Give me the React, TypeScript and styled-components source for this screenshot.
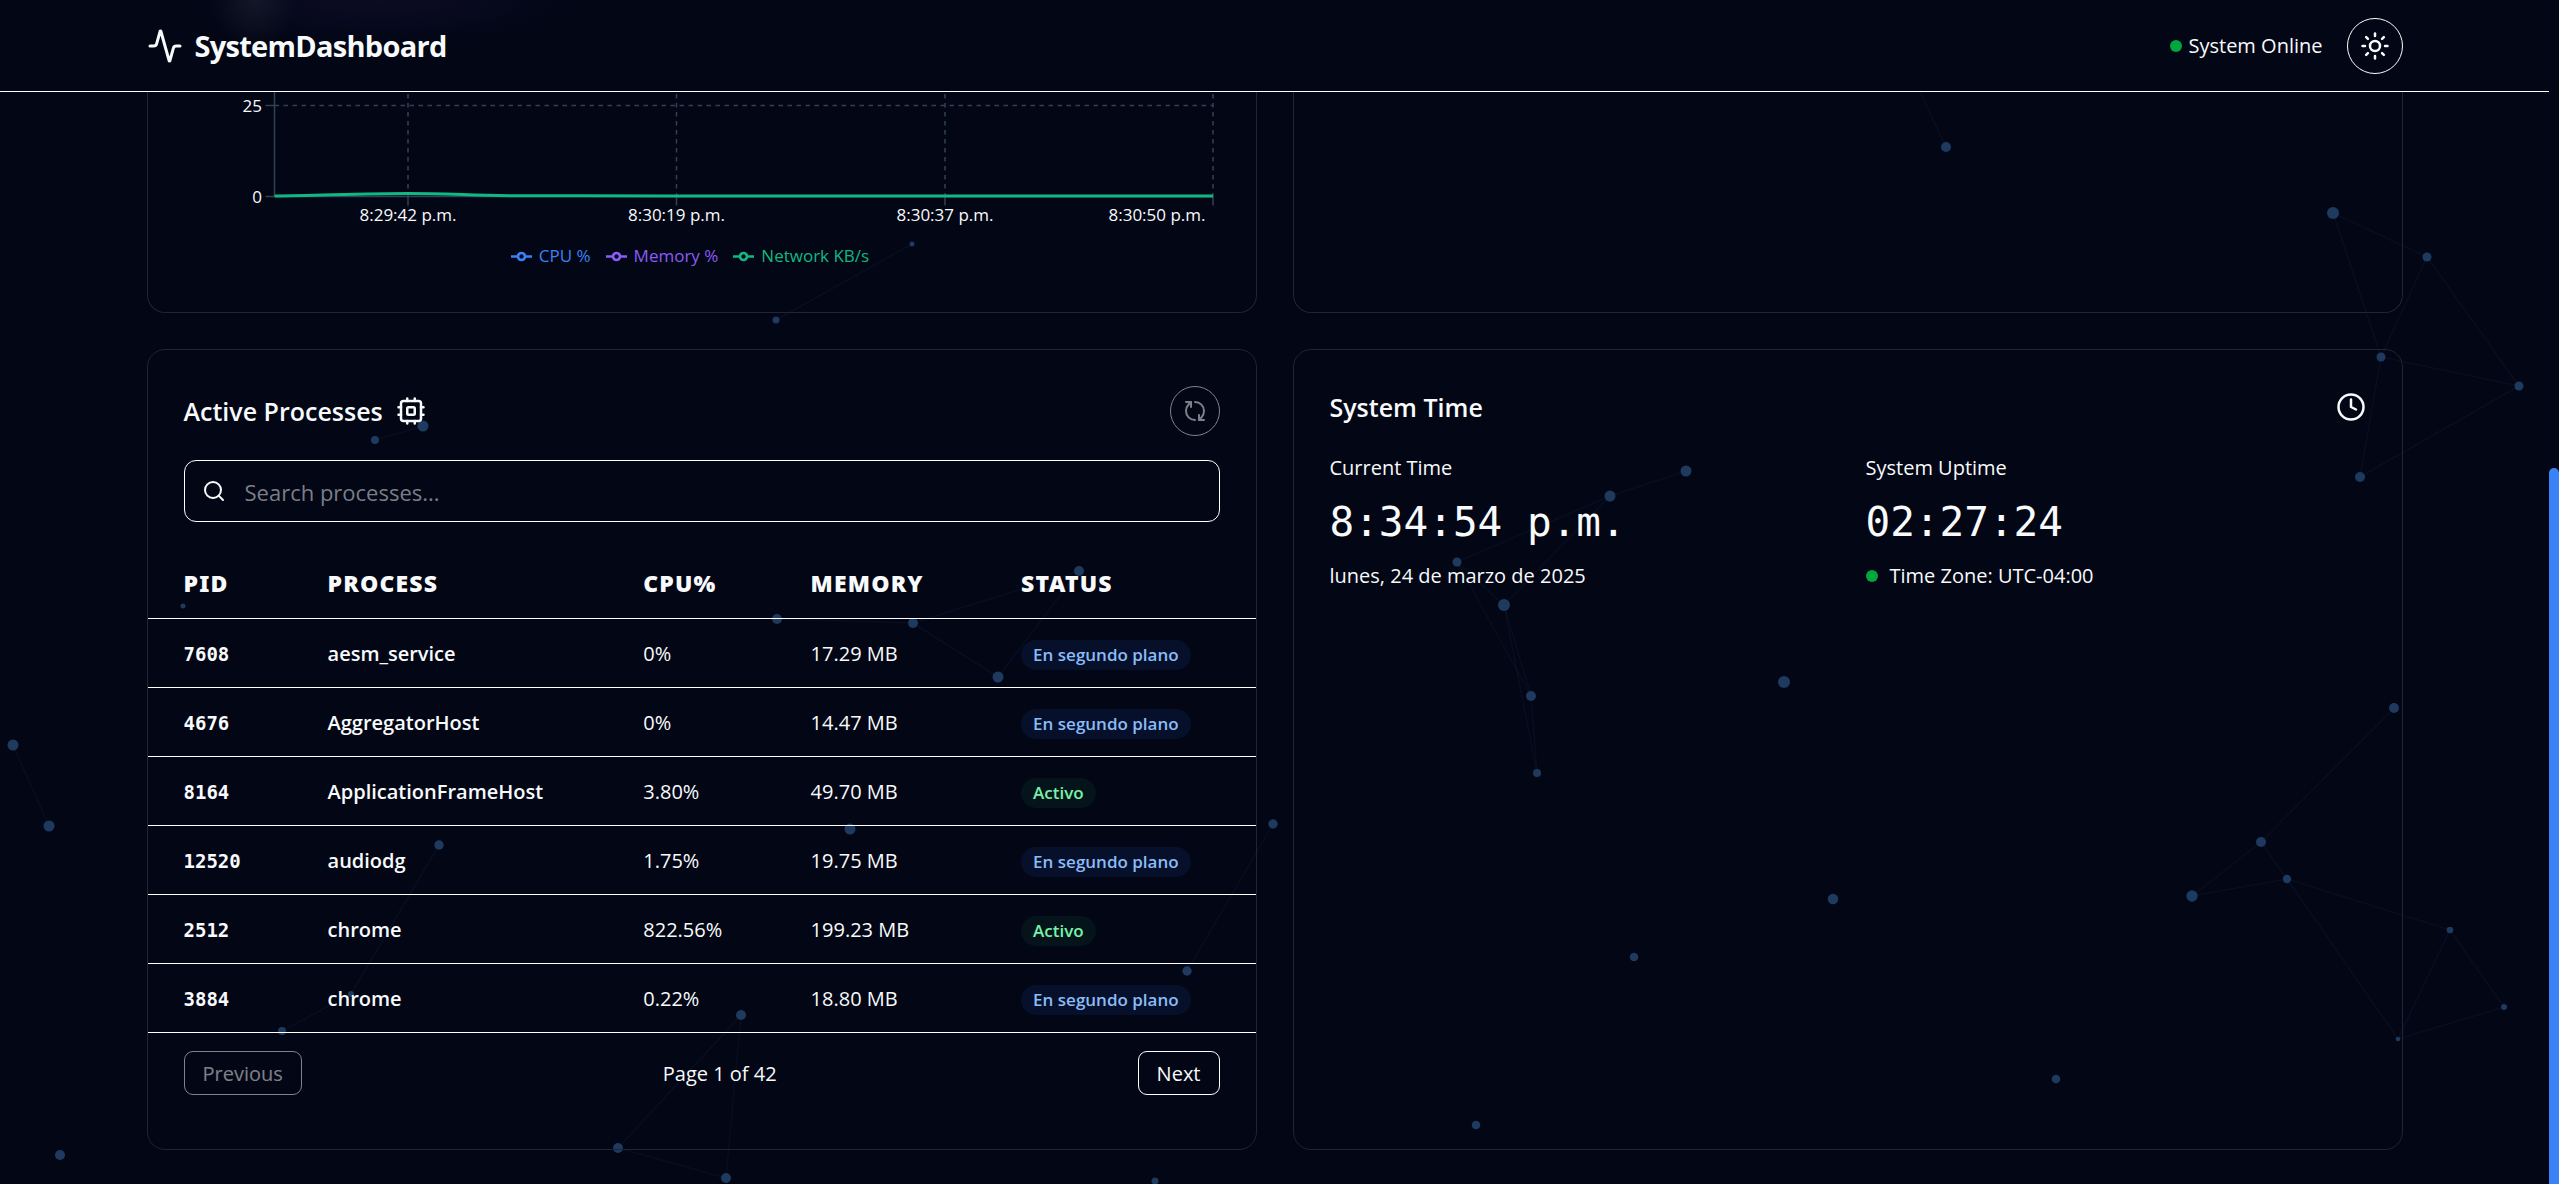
import React, { useState } from "react";
import styled, { createGlobalStyle, css } from "styled-components";
import { Activity, Clock, RefreshCw, Search, Sun } from "lucide-react";

const color = {
  page: "#020615",
  text: "#f8fafc",
  line: "#ffffff",
  cardBorder: "#1f2534",
  grid: "#334155",
  blue: "#3b82f6",
  violet: "#8b5cf6",
  green: "#10b981",
  online: "#00a63e",
};

const sans = `"Open Sans", "Noto Sans", sans-serif`;
const mono = `"DejaVu Sans Mono", "Liberation Mono", monospace`;

const GlobalStyle = createGlobalStyle`
  *, *::before, *::after { box-sizing: border-box; }
  body {
    margin: 0;
    background: ${color.page};
    color: ${color.text};
    font-family: ${sans};
    font-size: 20px;
    line-height: 30px;
  }
  button, input { font: inherit; color: inherit; }
  h1, h2, p, ul { margin: 0; padding: 0; }
`;

const Shell = styled.div`
  display: grid;
  grid-template-columns: minmax(0, 1fr) 10px;
  height: 100vh;
  overflow: hidden;
`;

const Page = styled.div`
  position: relative;
  overflow: hidden;
`;

const ParticleLayer = styled.svg`
  position: absolute;
  inset: 0;
  width: 100%;
  height: 100%;
  pointer-events: none;
`;

const ScrollTrack = styled.div`
  display: flex;
  flex-direction: column;
  justify-content: flex-end;
`;

const ScrollThumb = styled.div`
  height: 60.5%;
  border-radius: 5px 5px 0 0;
  background: ${color.blue};
`;

const Header = styled.header`
  position: relative;
  border-bottom: 1px solid ${color.line};
  background:
    radial-gradient(ellipse 42px 50px at 254px 0, rgba(90, 100, 105, 0.16), transparent),
    radial-gradient(ellipse 200px 45px at 380px 0, rgba(60, 35, 110, 0.18), transparent),
    ${color.page};
`;

const container = css`
  max-width: 2304px;
  margin: 0 auto;
  padding: 0 24px;
`;

const HeaderInner = styled.div`
  ${container}
  display: flex;
  align-items: center;
  justify-content: space-between;
  height: 91px;
`;

const Brand = styled.div`
  display: flex;
  align-items: center;
  gap: 12px;
`;

const BrandName = styled.h1`
  font-size: 29px;
  line-height: 42px;
  font-weight: 700;
  letter-spacing: -0.025em;
`;

const HeaderActions = styled.div`
  display: flex;
  align-items: center;
  gap: 24px;
`;

const StatusLine = styled.div<{ $gap: number }>`
  display: flex;
  align-items: center;
  gap: ${(p) => p.$gap}px;
`;

const Dot = styled.span`
  width: 12px;
  height: 12px;
  border-radius: 50%;
  background: ${color.online};
`;

const RoundButton = styled.button<{ $size: number }>`
  display: flex;
  align-items: center;
  justify-content: center;
  width: ${(p) => p.$size}px;
  height: ${(p) => p.$size}px;
  padding: 0;
  border: 1px solid ${color.line};
  border-radius: 50%;
  background: transparent;
  &:disabled { opacity: 0.5; }
`;

const Main = styled.main`
  ${container}
  position: relative;
  display: grid;
  grid-template-columns: repeat(2, minmax(0, 1fr));
  gap: 36px;
`;

const Card = styled.section`
  border: 1px solid ${color.cardBorder};
  border-radius: 18px;
  padding: 36px;
`;

const ScrolledCard = styled(Card)`
  border-top: 0;
  border-radius: 0 0 18px 18px;
  padding: 0 36px 41px;
`;

const Plot = styled.svg`
  display: block;
  width: 100%;
  font-size: 17px;
  fill: ${color.text};
`;

const Legend = styled.ul`
  display: flex;
  justify-content: center;
  gap: 15px;
  padding-right: 23px;
  list-style: none;
  font-size: 17px;
`;

const LegendItem = styled.li<{ $color: string }>`
  display: flex;
  align-items: center;
  gap: 7px;
  color: ${(p) => p.$color};
`;

const CardHeader = styled.div<{ $height: number }>`
  display: flex;
  align-items: center;
  justify-content: space-between;
  height: ${(p) => p.$height}px;
  margin-bottom: 24px;
`;

const CardTitle = styled.h2`
  display: flex;
  align-items: center;
  gap: 13px;
  font-size: 25px;
  line-height: 42px;
  font-weight: 600;
`;

const SearchBox = styled.label`
  display: flex;
  align-items: center;
  gap: 19px;
  height: 62px;
  padding: 0 17px;
  border: 1px solid ${color.line};
  border-radius: 12px;
`;

const SearchInput = styled.input`
  flex: 1;
  min-width: 0;
  padding: 2px 0 0;
  border: 0;
  outline: 0;
  background: transparent;
  font-size: 22px;
  &::placeholder { color: #7b7e87; opacity: 1; }
`;

const TableWrap = styled.div`
  margin: 24px -36px 18px;
`;

const Table = styled.table`
  width: 100%;
  table-layout: fixed;
  border-collapse: separate;
  border-spacing: 0;
`;

const Th = styled.th<{ $width: string }>`
  width: ${(p) => p.$width};
  height: 73px;
  padding: 2px 0 0 36px;
  border-bottom: 1px solid ${color.line};
  text-align: left;
  text-transform: uppercase;
  font-family: "Noto Sans", ${sans};
  font-size: 23px;
  font-weight: 900;
  letter-spacing: 0.05em;
`;

const Td = styled.td<{ $strong?: boolean; $mono?: boolean }>`
  height: 69px;
  padding: 2px 0 0 36px;
  border-bottom: 1px solid ${color.line};
  font-weight: ${(p) => (p.$strong ? 600 : 400)};
  ${(p) => p.$mono && css`
    font-family: ${mono};
    font-size: 19px;
    font-weight: 700;
  `}
`;

const Badge = styled.span<{ $active: boolean }>`
  display: inline-block;
  vertical-align: middle;
  padding: 0 12px;
  border-radius: 15px;
  font-size: 17px;
  line-height: 30px;
  font-weight: 600;
  color: ${(p) => (p.$active ? "#7bf1a8" : "#8abcf8")};
  background: ${(p) => (p.$active ? "#04141a" : "#07102a")};
`;

const Pager = styled.nav`
  display: flex;
  align-items: center;
  justify-content: space-between;
  margin-bottom: 18px;
`;

const PagerButton = styled.button`
  height: 44px;
  padding: 2px 18px 0;
  border: 1px solid ${color.line};
  border-radius: 9px;
  background: transparent;
  &:disabled { opacity: 0.5; }
`;

const PagerStatus = styled.span`
  padding-top: 2px;
`;

const TimeGrid = styled.div`
  display: grid;
  grid-template-columns: repeat(2, minmax(0, 1fr));
  gap: 36px;
  padding-top: 1px;
`;

const TimeBlock = styled.div`
  display: flex;
  flex-direction: column;
  gap: 12px;
`;

const TimeValue = styled.p`
  font-family: ${mono};
  font-size: 41px;
  line-height: 54px;
`;

const dots: [number, number, number][] = [
  [1946, 147, 5], [2333, 213, 6], [2427, 257, 4.5], [2381, 357, 4.5], [2519, 386, 4.5], [2360, 477, 5],
  [776, 320, 3.5], [912, 244, 2.5], [423, 426, 5.5], [375, 440, 4], [183, 606, 2.5],
  [777, 619, 5], [913, 623, 5], [998, 677, 5.5], [1079, 571, 5],
  [439, 845, 4.7], [351, 994, 3], [282, 1031, 4], [741, 1015, 5], [618, 1148, 5], [726, 1178, 5],
  [850, 829, 5.5], [1273, 824, 4.7], [1187, 971, 4.7], [1155, 1181, 3.5],
  [1686, 471, 5.5], [1610, 496, 5.5], [1457, 562, 4.5], [1504, 605, 6], [1531, 696, 5], [1537, 773, 4],
  [1784, 682, 6], [2394, 708, 5], [2261, 842, 5], [2287, 879, 4.2], [2192, 896, 5.7], [1833, 899, 5.3],
  [1634, 957, 4.3], [2450, 930, 3.3], [2504, 1007, 3], [2398, 1039, 2.3], [2056, 1079, 4.3], [1476, 1125, 4.3],
  [13, 745, 5.5], [49, 826, 5.5], [60, 1155, 5],
];

const links: [number, number, number, number][] = [
  [1946, 147, 1905, 60], [2333, 213, 2427, 257], [2333, 213, 2381, 357], [2427, 257, 2381, 357],
  [2427, 257, 2519, 386], [2381, 357, 2519, 386], [2381, 357, 2360, 477], [2519, 386, 2360, 477],
  [776, 320, 912, 244], [423, 426, 375, 440], [777, 619, 913, 623], [913, 623, 998, 677],
  [913, 623, 1079, 571], [998, 677, 1079, 571], [439, 845, 351, 994], [351, 994, 282, 1031],
  [741, 1015, 618, 1148], [741, 1015, 726, 1178], [618, 1148, 726, 1178], [1273, 824, 1187, 971],
  [1686, 471, 1610, 496], [1610, 496, 1457, 562], [1610, 496, 1504, 605], [1457, 562, 1504, 605],
  [1457, 562, 1531, 696], [1504, 605, 1531, 696], [1504, 605, 1537, 773], [1531, 696, 1537, 773],
  [2394, 708, 2261, 842], [2261, 842, 2287, 879], [2261, 842, 2192, 896], [2287, 879, 2192, 896],
  [2287, 879, 2450, 930], [2450, 930, 2504, 1007], [2450, 930, 2398, 1039], [2504, 1007, 2398, 1039],
  [2287, 879, 2398, 1039], [13, 745, 49, 826],
];

const Particles = () => (
  <ParticleLayer aria-hidden="true">
    <g stroke="#7fa0d0" strokeOpacity="0.06" strokeWidth="1.5">
      {links.map(([x1, y1, x2, y2], i) => <line key={i} x1={x1} y1={y1} x2={x2} y2={y2} />)}
    </g>
    <g fill="#1e3a5f">
      {dots.map(([x, y, r], i) => <circle key={i} cx={x} cy={y} r={r} />)}
    </g>
  </ParticleLayer>
);

const ChipIcon = () => (
  <svg
    width="30" height="30" viewBox="0 0 24 24" fill="none" stroke="currentColor"
    strokeWidth="2" strokeLinecap="round" strokeLinejoin="round" aria-hidden="true"
  >
    <rect x="4" y="4" width="16" height="16" rx="2" />
    <rect x="9" y="9" width="6" height="6" rx="1" />
    <path d="M15 2v2M15 20v2M2 15h2M2 9h2M20 15h2M20 9h2M9 2v2M9 20v2" />
  </svg>
);

const ticks = [
  { x: 224, label: "8:29:42 p.m.", textX: 224 },
  { x: 492.5, label: "8:30:19 p.m.", textX: 492.5 },
  { x: 761, label: "8:30:37 p.m.", textX: 761 },
  { x: 1029, label: "8:30:50 p.m.", textX: 973 },
];

const Chart = () => (
  <Plot viewBox="0 0 1036 149" role="img" aria-label="System usage history">
    <g stroke={color.grid} strokeWidth="1.5" strokeDasharray="4.5 4.5">
      <line x1="90.5" y1="13.5" x2="1029" y2="13.5" />
      {ticks.map((t) => <line key={t.x} x1={t.x} y1="2" x2={t.x} y2="104" />)}
    </g>
    <g stroke={color.grid} strokeWidth="1.5">
      <line x1="90.5" y1="0" x2="90.5" y2="104" />
      <line x1="90.5" y1="104.5" x2="1029" y2="104.5" />
      <line x1="81.5" y1="13.5" x2="90.5" y2="13.5" />
      <line x1="81.5" y1="104.5" x2="90.5" y2="104.5" />
      {ticks.map((t) => <line key={t.x} x1={t.x} y1="104" x2={t.x} y2="113.5" />)}
    </g>
    <path
      d="M90.5 104C135 103.5 180 101.5 224 101.5S290 103.8 340 103.8S450 104 492 104H1029"
      fill="none" stroke={color.green} strokeWidth="3"
    />
    <text x="78" y="20" textAnchor="end">25</text>
    <text x="78" y="111" textAnchor="end">0</text>
    {ticks.map((t) => <text key={t.x} x={t.textX} y="129" textAnchor="middle">{t.label}</text>)}
  </Plot>
);

const series = [
  { name: "CPU %", color: color.blue },
  { name: "Memory %", color: color.violet },
  { name: "Network KB/s", color: color.green },
];

const SeriesMark = () => (
  <svg width="21" height="21" viewBox="0 0 32 32" fill="none" stroke="currentColor" strokeWidth="4" aria-hidden="true">
    <path d="M0 16h10.67A5.33 5.33 0 1 1 21.33 16H32M21.33 16A5.33 5.33 0 1 1 10.67 16" />
  </svg>
);

const columns = [
  { name: "PID", width: "13%" },
  { name: "Process", width: "28.5%" },
  { name: "CPU%", width: "15.1%" },
  { name: "Memory", width: "19%" },
  { name: "Status", width: "24.4%" },
];

const processes = [
  { pid: 7608, name: "aesm_service", cpu: "0%", memory: "17.29 MB", active: false },
  { pid: 4676, name: "AggregatorHost", cpu: "0%", memory: "14.47 MB", active: false },
  { pid: 8164, name: "ApplicationFrameHost", cpu: "3.80%", memory: "49.70 MB", active: true },
  { pid: 12520, name: "audiodg", cpu: "1.75%", memory: "19.75 MB", active: false },
  { pid: 2512, name: "chrome", cpu: "822.56%", memory: "199.23 MB", active: true },
  { pid: 3884, name: "chrome", cpu: "0.22%", memory: "18.80 MB", active: false },
];

const ProcessCard = () => {
  const [query, setQuery] = useState("");
  const rows = processes.filter((p) => p.name.toLowerCase().includes(query.toLowerCase()));
  return (
    <Card>
      <CardHeader $height={50}>
        <CardTitle>Active Processes <ChipIcon /></CardTitle>
        <RoundButton $size={50} disabled aria-label="Refresh processes">
          <RefreshCw size={24} transform="rotate(-90)" />
        </RoundButton>
      </CardHeader>
      <SearchBox>
        <Search size={24} aria-hidden="true" />
        <SearchInput
          type="text"
          aria-label="Search processes"
          placeholder="Search processes..."
          value={query}
          onChange={(e) => setQuery(e.target.value)}
        />
      </SearchBox>
      <TableWrap>
        <Table>
          <thead>
            <tr>{columns.map((c) => <Th key={c.name} $width={c.width} scope="col">{c.name}</Th>)}</tr>
          </thead>
          <tbody>
            {rows.map((p) => (
              <tr key={p.pid}>
                <Td $mono>{p.pid}</Td>
                <Td $strong>{p.name}</Td>
                <Td>{p.cpu}</Td>
                <Td>{p.memory}</Td>
                <Td><Badge $active={p.active}>{p.active ? "Activo" : "En segundo plano"}</Badge></Td>
              </tr>
            ))}
          </tbody>
        </Table>
      </TableWrap>
      <Pager aria-label="Process pages">
        <PagerButton disabled>Previous</PagerButton>
        <PagerStatus>Page 1 of 42</PagerStatus>
        <PagerButton>Next</PagerButton>
      </Pager>
    </Card>
  );
};

const TimeCard = () => (
  <Card>
    <CardHeader $height={42}>
      <CardTitle>System Time</CardTitle>
      <Clock size={30} aria-hidden="true" />
    </CardHeader>
    <TimeGrid>
      <TimeBlock>
        <p>Current Time</p>
        <TimeValue>8:34:54 p.m.</TimeValue>
        <p>lunes, 24 de marzo de 2025</p>
      </TimeBlock>
      <TimeBlock>
        <p>System Uptime</p>
        <TimeValue>02:27:24</TimeValue>
        <StatusLine $gap={12}><Dot /> Time Zone: UTC-04:00</StatusLine>
      </TimeBlock>
    </TimeGrid>
  </Card>
);

export default function App() {
  return (
    <>
      <GlobalStyle />
      <Shell>
        <Page>
          <Particles />
          <Header>
            <HeaderInner>
              <Brand>
                <Activity size={36} aria-hidden="true" />
                <BrandName>SystemDashboard</BrandName>
              </Brand>
              <HeaderActions>
                <StatusLine $gap={6}><Dot /> System Online</StatusLine>
                <RoundButton $size={56} aria-label="Switch theme"><Sun size={30} /></RoundButton>
              </HeaderActions>
            </HeaderInner>
          </Header>
          <Main>
            <ScrolledCard>
              <Chart />
              <Legend>
                {series.map((s) => (
                  <LegendItem key={s.name} $color={s.color}><SeriesMark />{s.name}</LegendItem>
                ))}
              </Legend>
            </ScrolledCard>
            <ScrolledCard />
            <ProcessCard />
            <TimeCard />
          </Main>
        </Page>
        <ScrollTrack aria-hidden="true"><ScrollThumb /></ScrollTrack>
      </Shell>
    </>
  );
}
